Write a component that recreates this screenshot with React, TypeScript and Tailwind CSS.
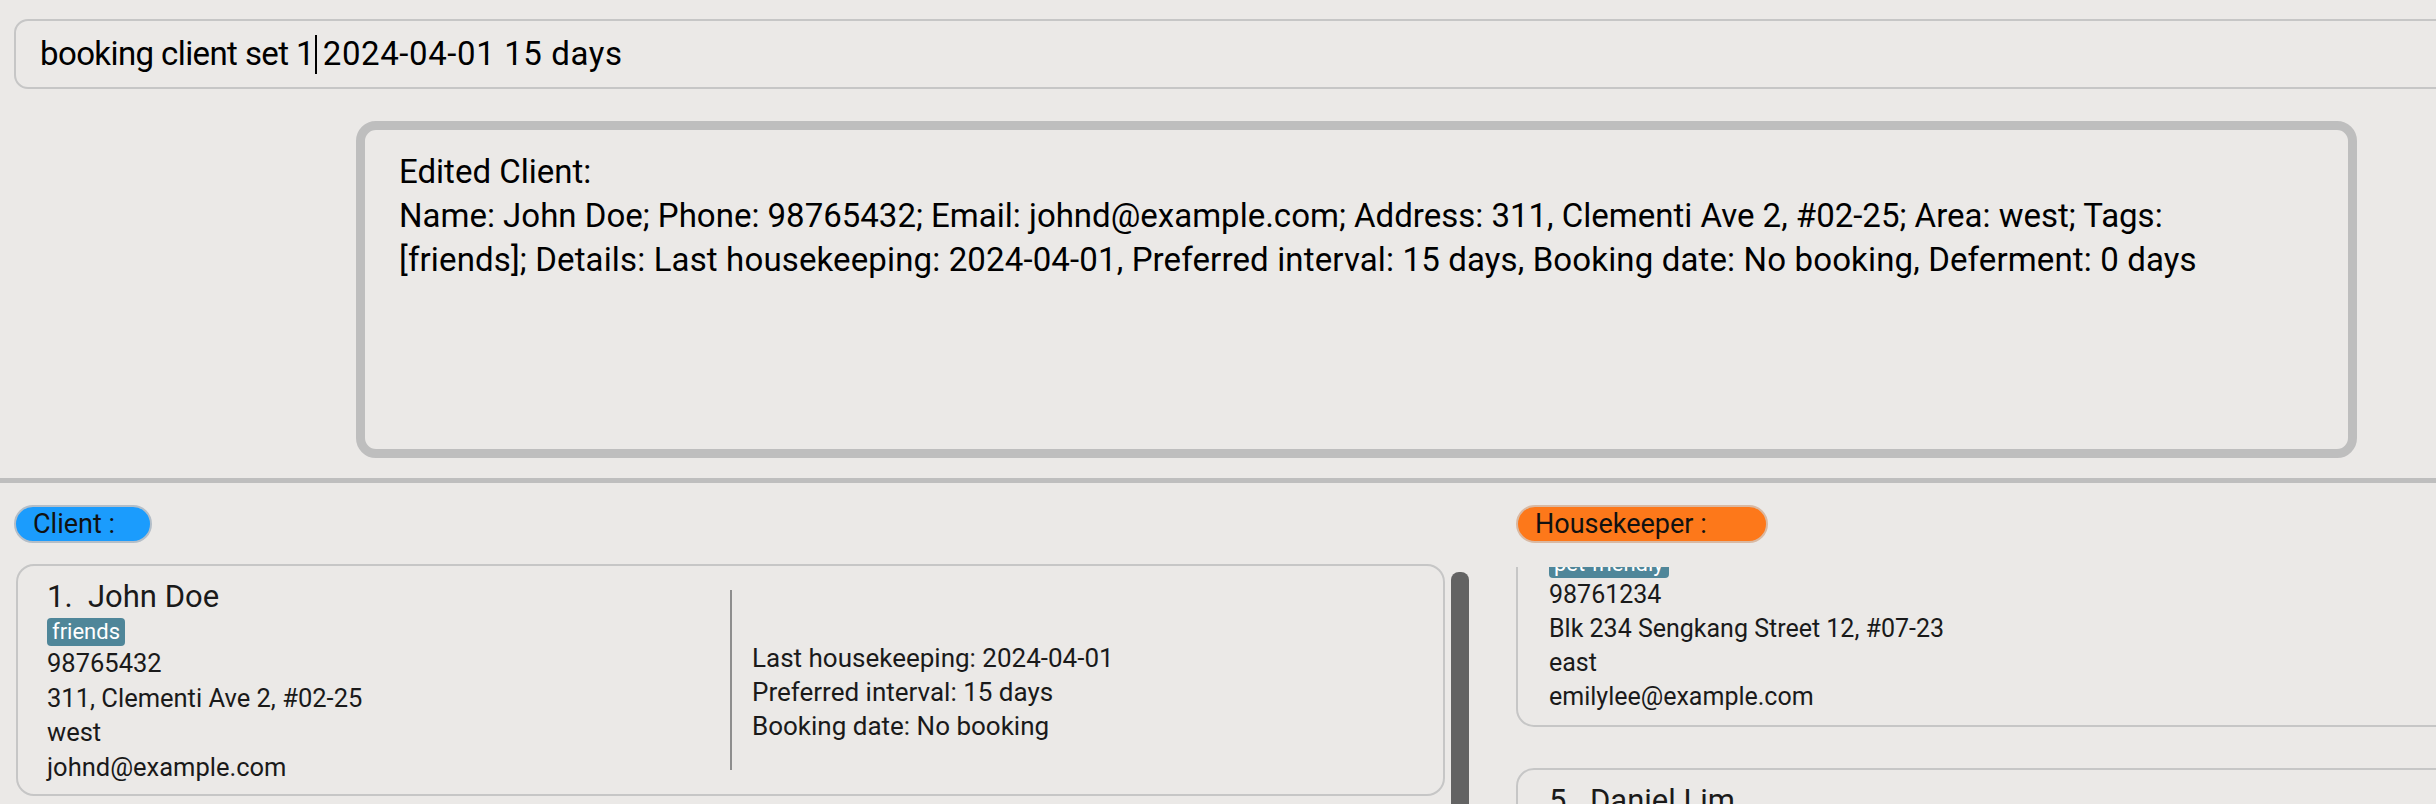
import React from "react";

const F = { fontFamily: "Roboto, 'Liberation Sans', Arial, sans-serif" };

function Tag({ children }: { children: React.ReactNode }) {
  return (
    <span className="inline-block bg-[#4f8699] text-white text-[22px] leading-[28px] px-[5px] rounded-[4px]">
      {children}
    </span>
  );
}

export default function App() {
  return (
    <div className="relative w-full h-[804px] overflow-hidden bg-[#ebe9e7] text-black" style={F}>
      {/* command box */}
      <div className="pt-[19px] pl-[14px]">
        <div className="w-[2460px] h-[70px] border-2 border-[#c6c6c6] rounded-[14px] flex items-center pl-[24px] text-[33px] whitespace-pre">
          <span className="tracking-[-0.6px]">booking client set 1</span>
          <span className="relative">
            <span className="absolute left-[1px] top-[-19px] w-[2px] h-[39px] bg-black" />
          </span>
          <span className="tracking-[0.6px]"> 2024-04-01 15 days</span>
        </div>
      </div>

      {/* result box */}
      <div className="ml-[356px] mt-[32px] w-[2001px] h-[337px] border-[9px] border-[#bebebe] rounded-[20px] pt-[20px] pl-[34px] pr-[40px] text-[33px] leading-[44px]">
        <div>Edited Client:</div>
        <div>
          Name: John Doe; Phone: 98765432; Email: johnd@example.com; Address: 311, Clementi Ave 2, #02-25; Area: west; Tags:
        </div>
        <div className="tracking-[0.14px]">
          [friends]; Details: Last housekeeping: 2024-04-01, Preferred interval: 15 days, Booking date: No booking, Deferment: 0 days
        </div>
      </div>

      {/* divider */}
      <div className="mt-[20px] h-[5px] w-full bg-[#bebebe]" />

      {/* lists */}
      <div className="flex pl-[14px] pt-[22px] text-[#1a1a1a]">
        {/* client column */}
        <div className="w-[1457px] shrink-0 flex flex-col">
          <div className="w-[138px] h-[38px] rounded-full bg-[#1b9cfd] border-2 border-[#b4bec8] flex items-center pl-[17px] text-[27px] text-[#111]">
            Client :
          </div>
          <div className="mt-[19px] flex">
            <div className="ml-[2px] mt-[2px] w-[1429px] h-[232px] border-2 border-[#c6c6c6] rounded-[18px] flex pt-[13px] pb-[9px] pl-[29px]">
              <div className="w-[683px] shrink-0 flex flex-col">
                <div className="text-[31px] leading-[36px] whitespace-pre">1.  John Doe</div>
                <div className="mt-[3px] flex">
                  <Tag>friends</Tag>
                </div>
                <div className="text-[25.5px] leading-[34.5px]">
                  <div>98765432</div>
                  <div>311, Clementi Ave 2, #02-25</div>
                  <div>west</div>
                  <div>johnd@example.com</div>
                </div>
              </div>
              <div className="w-[2px] bg-[#8e8e8e] mt-[11px] mb-[15px]" />
              <div className="flex flex-col justify-center pt-[20px] pl-[20px] text-[26px] leading-[34px]">
                <div>Last housekeeping: 2024-04-01</div>
                <div>Preferred interval: 15 days</div>
                <div>Booking date: No booking</div>
              </div>
            </div>
            <div className="ml-[6px] mt-[10px] w-[18px] h-[300px] bg-[#636363] rounded-t-[8px]" />
          </div>
        </div>

        {/* housekeeper column */}
        <div className="ml-[45px] w-[1000px] shrink-0 flex flex-col">
          <div className="w-[252px] h-[38px] rounded-full bg-[#fd781a] border-2 border-[#d9b9a3] flex items-center pl-[17px] text-[27px] text-[#111]">
            Housekeeper :
          </div>
          <div className="mt-[24px] h-[300px] overflow-hidden">
            <div className="-mt-[71px] flex flex-col gap-[41px]">
              <div className="w-[1000px] border-2 border-[#c6c6c6] rounded-[18px] pt-[13px] pb-[11px] pl-[31px] flex flex-col">
                <div className="text-[31px] leading-[36px] whitespace-pre">4.  Emily Lee</div>
                <div className="mt-[3px] flex">
                  <Tag>pet-friendly</Tag>
                </div>
                <div className="text-[25px] leading-[34px]">
                  <div>98761234</div>
                  <div>Blk 234 Sengkang Street 12, #07-23</div>
                  <div>east</div>
                  <div>emilylee@example.com</div>
                </div>
              </div>
              <div className="w-[1000px] h-[231px] border-2 border-[#c6c6c6] rounded-[18px] pt-[13px] pl-[31px]">
                <div className="text-[31px] leading-[36px] whitespace-pre">5.  Daniel Lim</div>
              </div>
            </div>
          </div>
        </div>
      </div>
    </div>
  );
}
